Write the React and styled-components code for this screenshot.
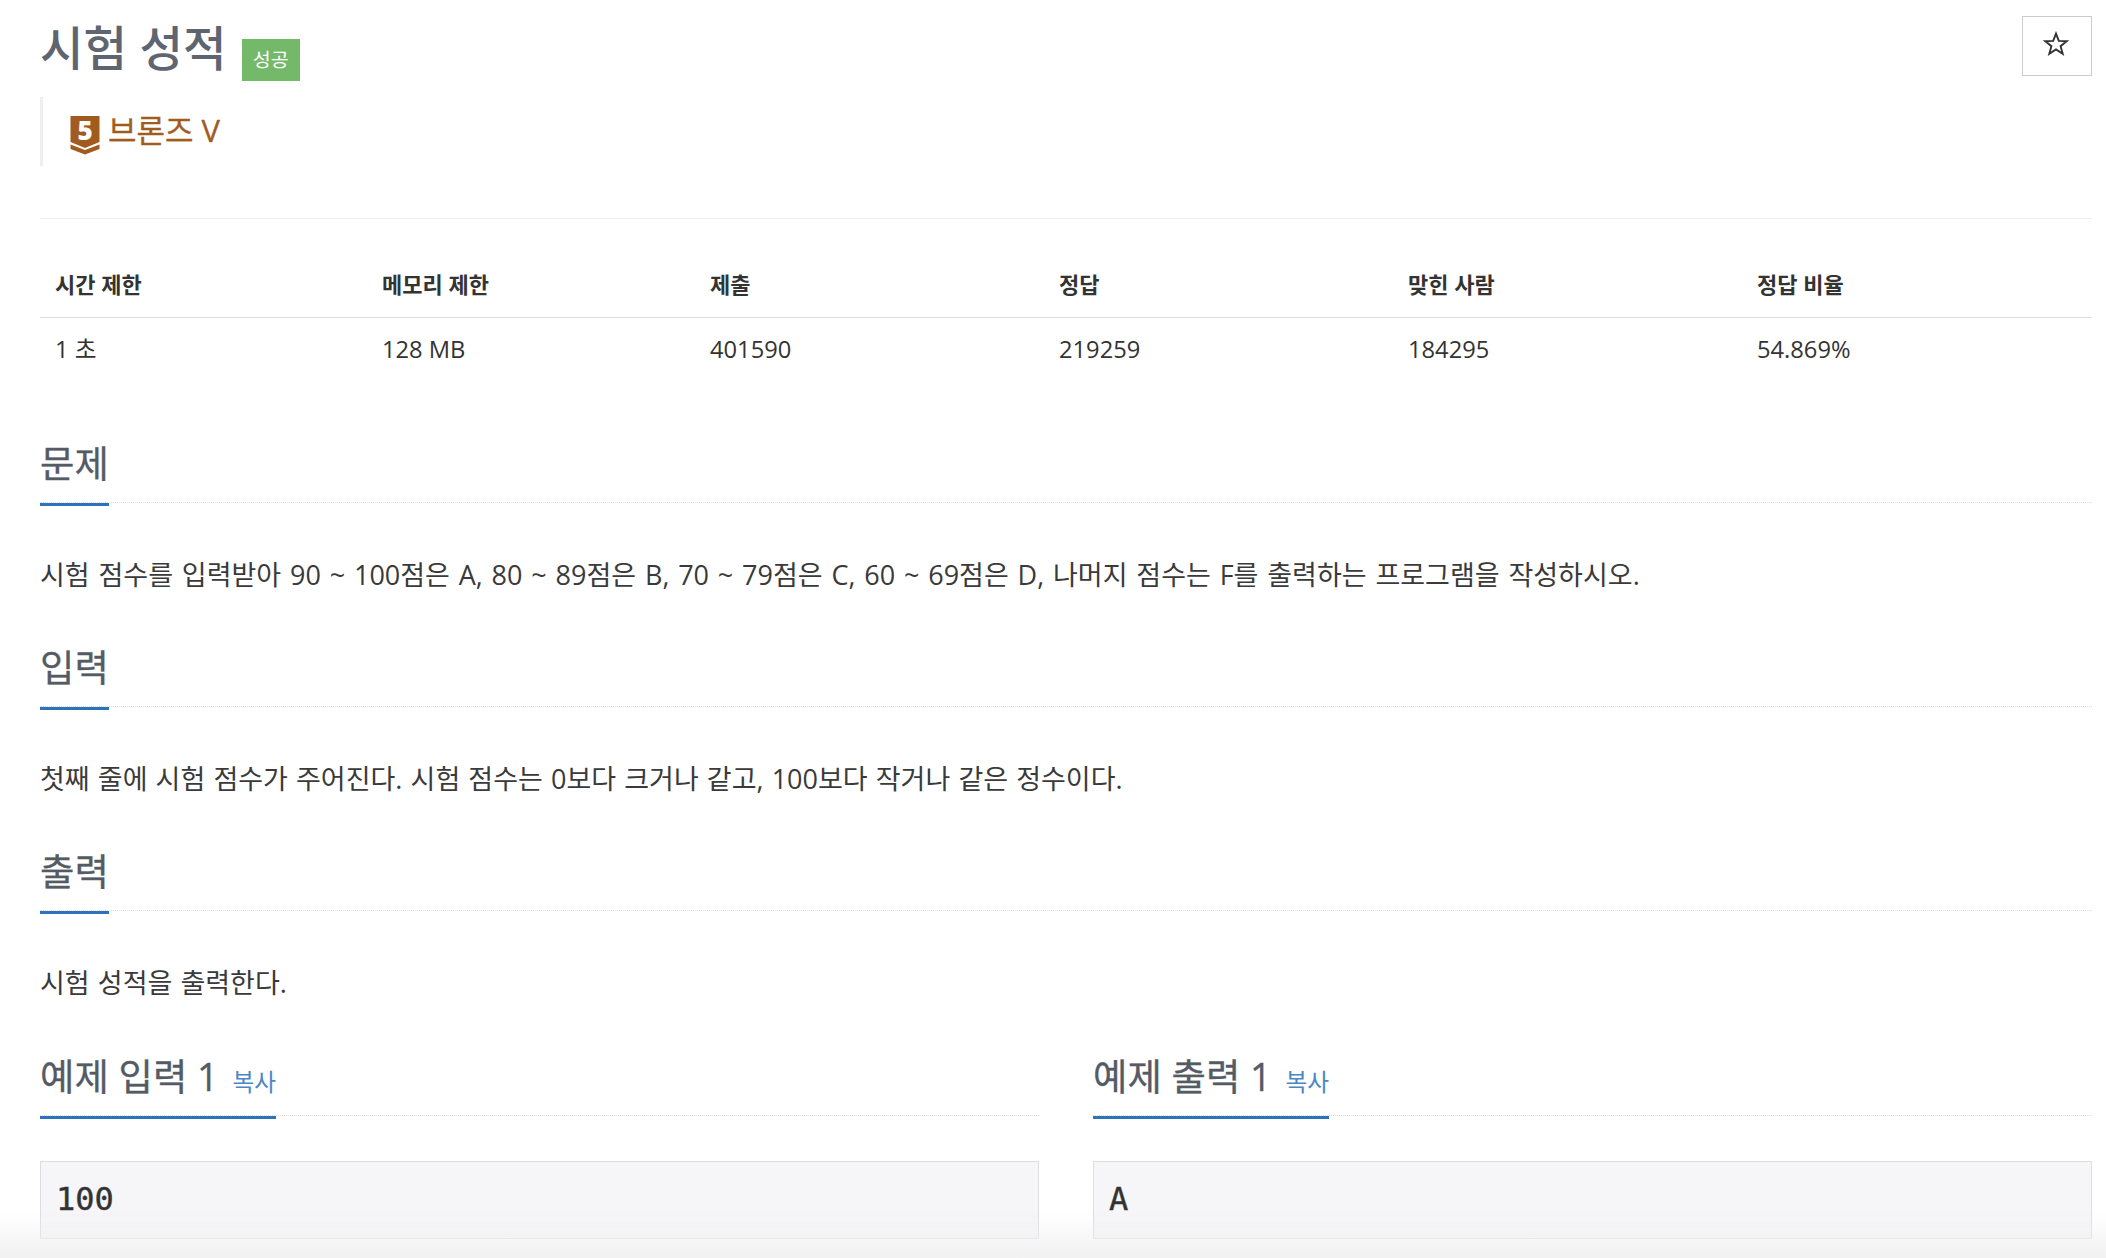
import React from 'react'
import styled, { createGlobalStyle } from 'styled-components'

const GlobalStyle = createGlobalStyle`
  html, body {
    margin: 0;
    padding: 0;
    height: 100%;
    overflow: hidden;
    background: #fff;
  }
  body {
    font-family: "Open Sans", "Noto Sans CJK KR", sans-serif;
    color: #333;
  }
  * {
    box-sizing: border-box;
  }
`

const stats = [
  { label: '시간 제한', value: '1 초' },
  { label: '메모리 제한', value: '128 MB' },
  { label: '제출', value: '401590' },
  { label: '정답', value: '219259' },
  { label: '맞힌 사람', value: '184295' },
  { label: '정답 비율', value: '54.869%' },
]

function TierIcon() {
  return (
    <TierMark>
      <svg width="30" height="39" viewBox="0 0 30 39" aria-hidden="true">
        <path d="M0.5 0H29.5V26L15 32L0.5 26Z" fill="#a25b1f" />
        <path d="M0.5 28.5L15 34L29.5 28.5V33L15 38.5L0.5 33Z" fill="#a25b1f" />
      </svg>
      <TierDigit>5</TierDigit>
    </TierMark>
  )
}

function StarIcon() {
  return (
    <svg width="26" height="25" viewBox="0 0 26 25" aria-hidden="true">
      <path d="M13 2.6L15.8 9.9L23.7 10.2L17.6 15.2L19.7 22.8L13 18.5L6.3 22.8L8.4 15.2L2.3 10.2L10.2 9.9Z" fill="none" stroke="#333" strokeWidth="1.9" />
    </svg>
  )
}

function Section({ title, wordGap, children }) {
  return (
    <section>
      <Headline>
        <HeadlineTitle>{title}</HeadlineTitle>
      </Headline>
      <Paragraph $wordGap={wordGap}>{children}</Paragraph>
    </section>
  )
}

function Sample({ title, data }) {
  return (
    <div>
      <Headline $sample>
        <HeadlineTitle>
          {title}
          <CopyLink href="#">복사</CopyLink>
        </HeadlineTitle>
      </Headline>
      <SampleData>{data}</SampleData>
    </div>
  )
}

export default function App() {
  return (
    <>
      <GlobalStyle />
      <Page>
        <Header>
          <TitleRow>
            <Title>시험 성적</Title>
            <Badge>성공</Badge>
          </TitleRow>
          <StarButton type="button" aria-label="즐겨찾기">
            <StarIcon />
          </StarButton>
        </Header>
        <TierBlock>
          <TierIcon />
          <TierName>브론즈 V</TierName>
        </TierBlock>
        <Divider />
        <StatsGrid>
          {stats.map((s) => (
            <StatHead key={s.label}>{s.label}</StatHead>
          ))}
          {stats.map((s) => (
            <StatCell key={s.label}>{s.value}</StatCell>
          ))}
        </StatsGrid>
        <Section title="문제" wordGap="1.8px">
          시험 점수를 입력받아 90 ~ 100점은 A, 80 ~ 89점은 B, 70 ~ 79점은 C, 60 ~ 69점은 D, 나머지 점수는 F를 출력하는 프로그램을 작성하시오.
        </Section>
        <Section title="입력" wordGap="1.1px">
          첫째 줄에 시험 점수가 주어진다. 시험 점수는 0보다 크거나 같고, 100보다 작거나 같은 정수이다.
        </Section>
        <Section title="출력" wordGap="1.1px">시험 성적을 출력한다.</Section>
        <Samples>
          <Sample title="예제 입력 1" data="100" />
          <Sample title="예제 출력 1" data="A" />
        </Samples>
      </Page>
      <BottomFade />
    </>
  )
}

const Page = styled.div`
  width: 2106px;
  height: 1258px;
  padding: 0 14px 0 40px;
  overflow: hidden;
`

const Header = styled.div`
  display: flex;
  justify-content: space-between;
  align-items: flex-start;
  height: 97px;
`

const TitleRow = styled.div`
  display: flex;
  align-items: flex-start;
  gap: 15px;
`

const Title = styled.h1`
  margin: 16px 0 0;
  font-size: 47.4px;
  line-height: 64px;
  font-weight: 500;
  color: #5e6570;
`

const Badge = styled.span`
  margin-top: 39px;
  width: 58px;
  height: 42px;
  background: #74b86a;
  color: #fff;
  font-size: 19.5px;
  line-height: 42px;
  text-align: center;
`

const StarButton = styled.button`
  margin-top: 16px;
  width: 70px;
  height: 60px;
  display: flex;
  align-items: center;
  justify-content: center;
  background: #fff;
  border: 1px solid #ccc;
  padding: 0 2px 5px 0;
`

const TierBlock = styled.div`
  height: 69px;
  border-left: 3px solid #eee;
  padding: 19px 0 0 27px;
  display: flex;
  align-items: flex-start;
  gap: 8px;
`

const TierMark = styled.span`
  position: relative;
  display: block;
  width: 30px;
  height: 39px;
`

const TierDigit = styled.span`
  position: absolute;
  top: 0;
  left: 0;
  width: 100%;
  text-align: center;
  font-size: 26px;
  font-weight: 800;
  line-height: 28px;
  color: #fff;
`

const TierName = styled.span`
  margin-top: -2px;
  font-size: 31px;
  line-height: 32px;
  color: #a25b1f;
  -webkit-text-stroke: 0.3px #a25b1f;
`

const Divider = styled.div`
  height: 1px;
  margin-top: 52px;
  background: #eee;
`

const StatsGrid = styled.div`
  display: grid;
  grid-template-columns: 327px 328px 349px 349px 349px 1fr;
  margin: 33px 0 53px;
`

const StatHead = styled.div`
  height: 66px;
  padding: 0 15px;
  font-size: 22px;
  font-weight: 700;
  line-height: 65px;
  border-bottom: 1px solid #ddd;
  color: #333;
`

const StatCell = styled.div`
  height: 64px;
  padding: 0 15px;
  font-size: 23.7px;
  line-height: 62px;
  color: #333;
`

const Headline = styled.div`
  margin-top: ${(p) => (p.$sample ? '37px' : '36px')};
  border-bottom: 1px dotted #ddd;
  height: 68px;
`

const HeadlineTitle = styled.h2`
  display: inline-block;
  height: 71px;
  margin: 0;
  font-size: 37.4px;
  font-weight: 400;
  line-height: 57px;
  color: #555b65;
  -webkit-text-stroke: 0.3px #555b65;
  border-bottom: 3px solid #2d72bc;
`

const Paragraph = styled.p`
  margin: 0;
  padding-top: 54px;
  height: 100px;
  font-size: 27px;
  word-spacing: ${(p) => p.$wordGap};
  line-height: 36px;
  color: #3a3a3a;
`

const Samples = styled.div`
  display: grid;
  grid-template-columns: 1fr 1fr;
  column-gap: 54px;
`

const CopyLink = styled.a`
  margin-left: 14px;
  font-size: 23.7px;
  color: #4a86c8;
  -webkit-text-stroke: 0;
  text-decoration: none;
`

const SampleData = styled.pre`
  margin: 45px 0 0;
  height: 78px;
  padding: 0 15px;
  background: #f6f6f8;
  border: 1px solid #dcdce2;
  font-family: "DejaVu Sans Mono", monospace;
  font-size: 32px;
  line-height: 74px;
  color: #333;
  -webkit-text-stroke: 0.4px #333;
`

const BottomFade = styled.div`
  position: fixed;
  left: 0;
  right: 0;
  bottom: 0;
  height: 45px;
  background: linear-gradient(to bottom, rgba(240, 240, 240, 0), rgba(240, 240, 240, 0.9));
  pointer-events: none;
`
